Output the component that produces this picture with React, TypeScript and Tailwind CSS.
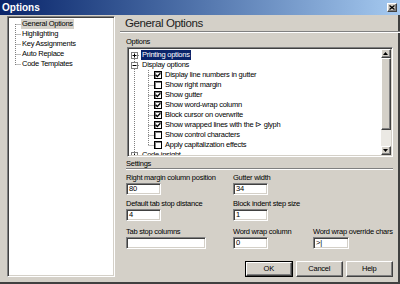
import React from 'react';

const sunken =
  'border border-t-[#808080] border-l-[#808080] border-b-white border-r-white shadow-[inset_1px_1px_0_#404040,inset_-1px_-1px_0_#d4d0c8]';
const raised =
  'border border-t-white border-l-white border-b-[#404040] border-r-[#404040] shadow-[inset_-1px_-1px_0_#808080] bg-[#d4d0c8]';

const pages = ['General Options', 'Highlighting', 'Key Assignments', 'Auto Replace', 'Code Templates'];

const displayOpts: [string, boolean][] = [
  ['Display line numbers in gutter', true],
  ['Show right margin', false],
  ['Show gutter', true],
  ['Show word-wrap column', true],
  ['Block cursor on overwrite', true],
  ['Show wrapped lines with the \u22b3 glyph', true],
  ['Show control characters', false],
  ['Apply capitalization effects', false],
];

function Expander({ open }: { open?: boolean }) {
  return (
    <div className="w-[7px] h-[7px] border border-[#808080] bg-white flex items-center justify-center shrink-0">
      <svg width="5" height="5" viewBox="0 0 5 5">
        <path d="M0.5 2.5H4.5" stroke="#000" strokeWidth="1" />
        {!open && <path d="M2.5 0.5V4.5" stroke="#000" strokeWidth="1" />}
      </svg>
    </div>
  );
}

function Check({ on }: { on: boolean }) {
  return (
    <div className="w-[8px] h-[8px] border border-black bg-white flex items-center justify-center shrink-0 shadow-[inset_1px_1px_0_#808080]">
      {on && (
        <svg width="6" height="6" viewBox="0 0 6 6">
          <path d="M0.6 2.8L2.3 4.5L5.4 1.2" fill="none" stroke="#000" strokeWidth="1.4" />
        </svg>
      )}
    </div>
  );
}

function Field({ label, value, w }: { label: string; value: string; w: string }) {
  return (
    <div className="flex flex-col">
      <div className="h-[10px] leading-[10px] whitespace-nowrap">{label}</div>
      <div className={`${sunken} ${w} h-[12px] bg-white pl-[2px] leading-[10px]`}>{value}</div>
    </div>
  );
}

function Button({ label, def }: { label: string; def?: boolean }) {
  const inner = (
    <div className={`${raised} w-full h-full flex items-center justify-center`}>{label}</div>
  );
  return def ? (
    <div className="w-[48px] h-[16px] border border-black">{inner}</div>
  ) : (
    <div className="w-[47px] h-[16px]">{inner}</div>
  );
}

export default function App() {
  return (
    <div className="w-[400px] h-[284px] bg-[#d4d0c8] flex flex-col font-['Liberation_Sans',Arial,sans-serif] text-black text-[7.5px] tracking-[-0.25px] overflow-hidden">
      {/* Title bar */}
      <div className="h-[15px] shrink-0 flex items-center justify-between pl-[2px] pr-[3px] bg-linear-to-r from-[#0a246a] to-[#a6caf0]">
        <span className="text-[10px] font-bold text-white leading-none tracking-normal">Options</span>
        <div className={`${raised} w-[10px] h-[9px] flex items-center justify-center`}>
          <svg width="6" height="5" viewBox="0 0 6 5">
            <path d="M0.5 0.5L5.5 4.5M5.5 0.5L0.5 4.5" stroke="#000" strokeWidth="1.3" />
          </svg>
        </div>
      </div>

      <div className="flex-1 flex border-r-2 border-r-[#404040] border-b-2 border-b-[#404040]">
        {/* Page tree */}
        <div className="w-[120px] shrink-0 pl-[7px] pt-[1px]">
          <div className={`${sunken} w-[108px] h-[261px] bg-white relative pt-[2px]`}>
            <svg className="absolute left-0 top-0" width="20" height="60">
              <path d="M7.5 7V48M7.5 7.5H13M7.5 17.5H13M7.5 27.5H13M7.5 37.5H13M7.5 47.5H13" stroke="#808080" strokeDasharray="1 1" />
            </svg>
            {pages.map((p, i) => (
              <div key={p} className="h-[10px] flex items-center pl-[13px]">
                <span className={`px-[1px] leading-[10px] ${i === 0 ? 'bg-[#d4d0c8]' : ''}`}>{p}</span>
              </div>
            ))}
          </div>
        </div>

        {/* Right side */}
        <div className="flex-1 flex flex-col">
          <div className="h-[16px] pl-[5px] text-[11.5px] leading-[16px] tracking-[-0.4px] text-[#202020]">General Options</div>
          <div className="h-[2px] border-t border-t-[#808080] border-b border-b-white" />

          <div className="pl-[6px] pr-[10px] flex flex-col">
            <div className="mt-[4px] h-[10px] leading-[10px]">Options</div>
            {/* Options tree */}
            <div className={`${sunken} ml-[1px] h-[110px] bg-white flex p-[1px]`}>
              <div className="flex-1 relative overflow-hidden pt-[1px]">
                <svg className="absolute left-0 top-[1px]" width="30" height="106">
                  <path d="M5.5 5V106M9 5.5H11M9 15.5H11M19.5 20V95M19.5 25.5H25M19.5 35.5H25M19.5 45.5H25M19.5 55.5H25M19.5 65.5H25M19.5 75.5H25M19.5 85.5H25M19.5 95.5H25" stroke="#808080" strokeDasharray="1 1" />
                </svg>
                <div className="relative">
                  <div className="h-[10px] flex items-center pl-[2px]">
                    <Expander />
                    <span className="ml-[3px] px-[1px] leading-[10px] bg-[#0a246a] text-white">Printing options</span>
                  </div>
                  <div className="h-[10px] flex items-center pl-[2px]">
                    <Expander open />
                    <span className="ml-[3px] px-[1px] leading-[10px]">Display options</span>
                  </div>
                  {displayOpts.map(([t, on]) => (
                    <div key={t} className="h-[10px] flex items-center pl-[25px]">
                      <Check on={on} />
                      <span className="ml-[3px] leading-[10px] whitespace-nowrap">{t}</span>
                    </div>
                  ))}
                  <div className="h-[10px] flex items-center pl-[2px]">
                    <Expander />
                    <span className="ml-[3px] px-[1px] leading-[10px]">Code insight</span>
                  </div>
                </div>
              </div>
              {/* Scrollbar */}
              <div className="w-[10px] flex flex-col bg-[#ebe9e4]">
                <div className={`${raised} h-[9px] flex items-center justify-center`}>
                  <svg width="5" height="3" viewBox="0 0 5 3"><path d="M2.5 0L5 3H0Z" fill="#000" /></svg>
                </div>
                <div className={`${raised} h-[72px]`} />
                <div className="flex-1" />
                <div className={`${raised} h-[9px] flex items-center justify-center`}>
                  <svg width="5" height="3" viewBox="0 0 5 3"><path d="M0 0H5L2.5 3Z" fill="#000" /></svg>
                </div>
              </div>
            </div>

            <div className="mt-[3px] h-[8px] leading-[8px]">Settings</div>
            <div className="h-[2px] border-t border-t-[#808080] border-b border-b-white" />

            <div className="mt-[3px] grid grid-cols-[107px_80px_1fr] gap-y-[4px]">
              <Field label="Right margin column position" value="80" w="w-[35px]" />
              <Field label="Gutter width" value="34" w="w-[35px]" />
              <div />
              <Field label="Default tab stop distance" value="4" w="w-[35px]" />
              <Field label="Block indent step size" value="1" w="w-[35px]" />
              <div />
              <div className="mt-[2px]"><Field label="Tab stop columns" value="" w="w-[80px]" /></div>
              <div className="mt-[2px]"><Field label="Word wrap column" value="0" w="w-[35px]" /></div>
              <div className="mt-[2px]"><Field label="Word wrap override chars" value=">|" w="w-[36px]" /></div>
            </div>

            <div className="mt-[12px] flex justify-end gap-[3px]">
              <Button label="OK" def />
              <Button label="Cancel" />
              <Button label="Help" />
            </div>
          </div>
        </div>
      </div>
    </div>
  );
}
